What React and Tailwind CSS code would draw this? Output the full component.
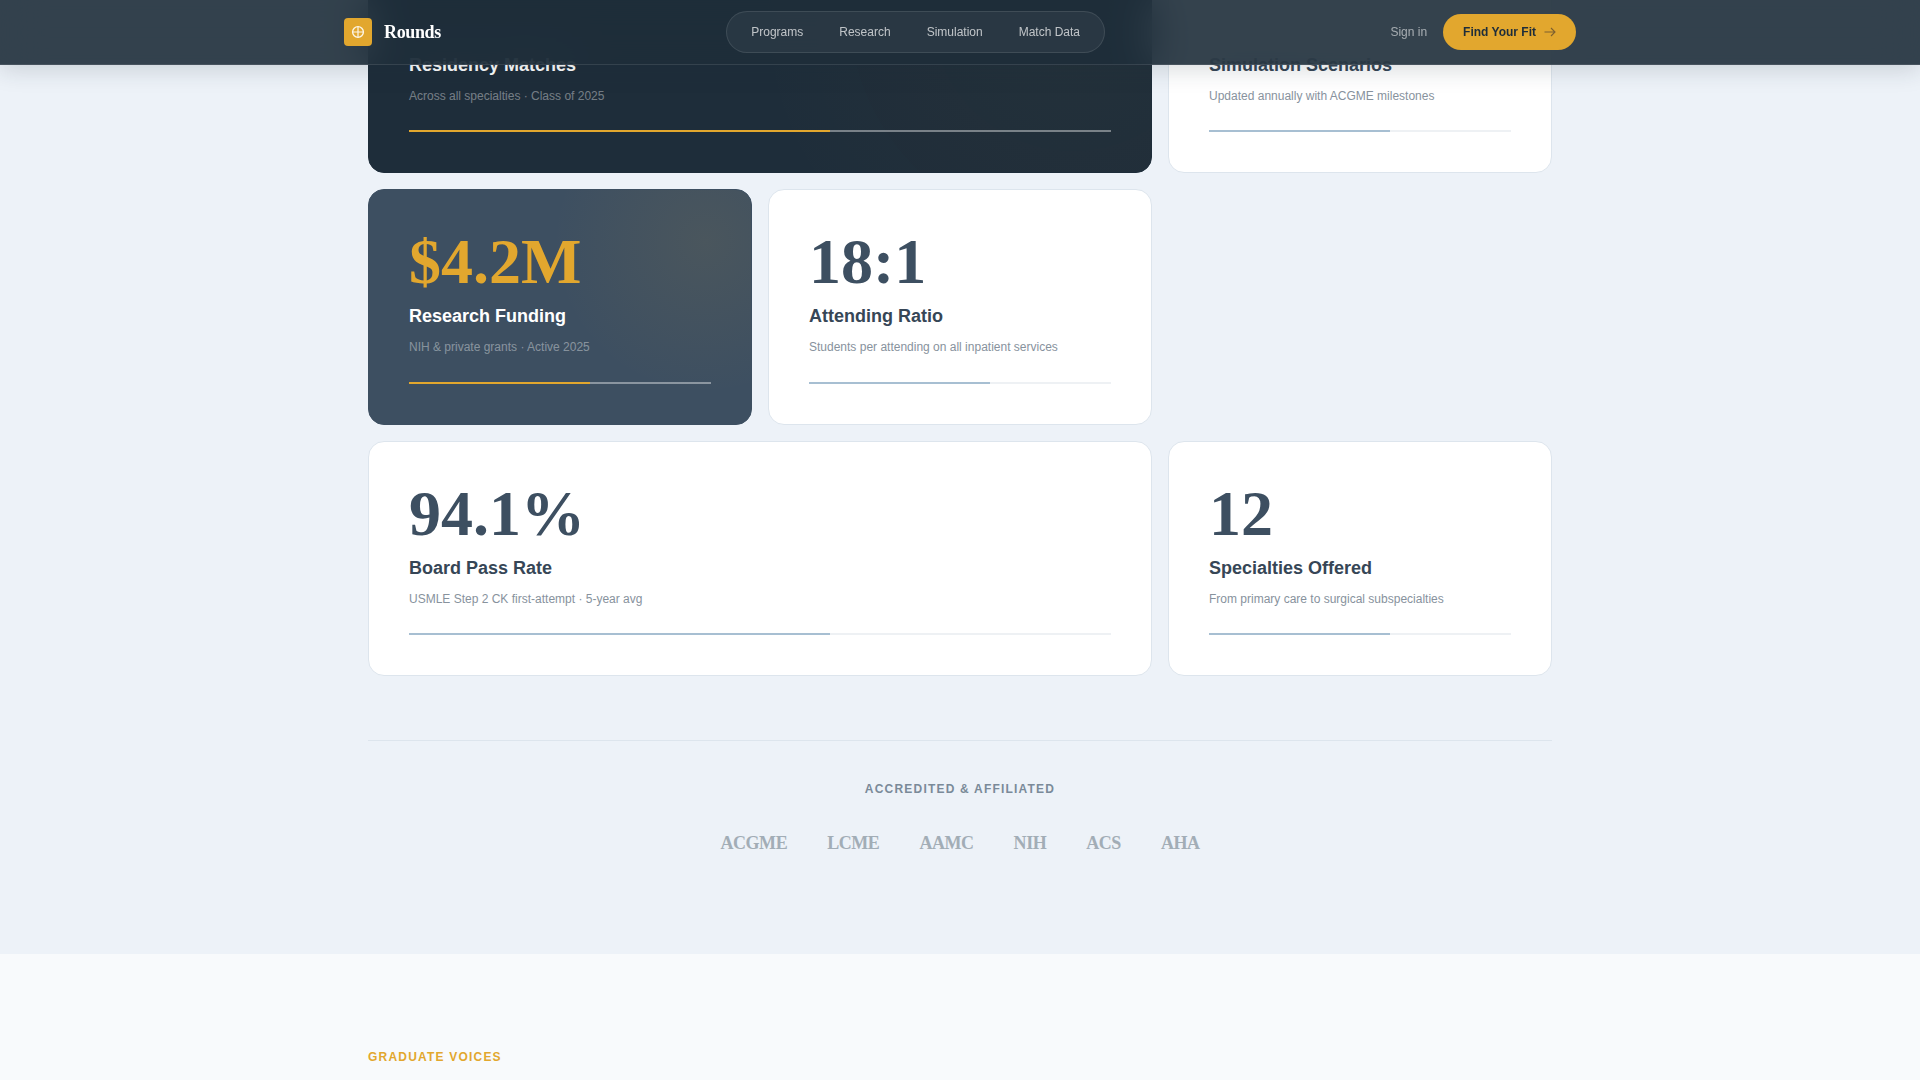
const navLinks = ["Programs", "Research", "Simulation", "Match Data"];
const logos = ["ACGME", "LCME", "AAMC", "NIH", "ACS", "AHA"];

const stats = [
  { title: "Residency Matches", sub: "Across all specialties · Class of 2025", tone: "navy", span: true },
  { title: "Simulation Scenarios", sub: "Updated annually with ACGME milestones", tone: "white" },
  { value: "$4.2M", title: "Research Funding", sub: "NIH & private grants · Active 2025", tone: "slate" },
  { value: "18:1", title: "Attending Ratio", sub: "Students per attending on all inpatient services", tone: "white", wrapAfter: true },
  { value: "94.1%", title: "Board Pass Rate", sub: "USMLE Step 2 CK first-attempt · 5-year avg", tone: "white", span: true },
  { value: "12", title: "Specialties Offered", sub: "From primary care to surgical subspecialties", tone: "white" },
];

const toneClasses = {
  navy: {
    card: "bg-[#1e2d3a] border-[#1e2d3a] bg-[radial-gradient(circle_at_90%_30%,rgba(226,167,46,0.03),transparent_45%)]",
    value: "text-[#e2a72e]",
    title: "text-white",
    sub: "text-white/40",
    track: "bg-white/40",
    fill: "bg-[#e2a72e]",
  },
  slate: {
    card: "bg-[#3d4f61] border-[#3d4f61] bg-[radial-gradient(circle_at_88%_22%,rgba(226,167,46,0.08),transparent_40%)]",
    value: "text-[#e2a72e]",
    title: "text-white",
    sub: "text-white/40",
    track: "bg-white/40",
    fill: "bg-[#e2a72e]",
  },
  white: {
    card: "bg-white border-[#dde5ed]",
    value: "text-[#3d4f61]",
    title: "text-[#364656]",
    sub: "text-[#87929d]",
    track: "bg-[#eef1f4]",
    fill: "bg-[#a7bfd2]",
  },
};

const StatCard = ({ stat }) => {
  const tone = toneClasses[stat.tone];
  return (
    <div className={`rounded-2xl border p-10 ${tone.card} ${stat.span ? "col-span-2" : ""}`}>
      {/* top row sits behind the nav, its figure never shows */}
      <div className={`h-16 font-['Liberation_Serif',serif] text-[64px] leading-none font-bold ${tone.value}`}>
        {stat.value}
      </div>
      <h3 className={`mt-[9px] text-lg leading-[27px] font-bold ${tone.title}`}>{stat.title}</h3>
      <p className={`mt-2 text-xs leading-[18px] ${tone.sub}`}>{stat.sub}</p>
      <div className={`mt-[25.6px] h-0.5 ${tone.track}`}>
        <div className={`h-full w-[60%] ${tone.fill}`}></div>
      </div>
    </div>
  );
};

export default function App() {
  return (
    <div className="relative h-screen overflow-hidden bg-[#edf2f8] font-['Liberation_Sans',Arial,sans-serif]">
      {/* nav floats over the scrolled page */}
      <nav className="absolute inset-x-0 top-0 z-10 border-b border-white/10 bg-[#1e2d3a]/[0.9] shadow-[0_4px_24px_rgba(30,45,58,0.18)] backdrop-blur-[20px]">
        <div className="mx-auto flex h-16 max-w-[1280px] items-center justify-between px-6">
          <div className="flex items-center gap-3">
            <div className="flex h-7 w-7 items-center justify-center rounded bg-[#e2a72e]">
              <svg width="14" height="14" viewBox="0 0 14 14" fill="none" stroke="#fdf6e6" strokeWidth="1.4">
                <circle cx="7" cy="7" r="5.4" />
                <path d="M7 1.6v10.8M1.6 7h10.8" strokeWidth="1.2" />
              </svg>
            </div>
            <span className="font-['Liberation_Serif',serif] text-lg font-bold tracking-[-0.02em] text-white">Rounds</span>
          </div>

          <div className="flex items-center rounded-full border border-white/10 bg-white/5 p-1.5">
            {navLinks.map((link) => (
              <a key={link} className="px-[18px] py-[5px] text-xs leading-[18px] text-white/70">
                {link}
              </a>
            ))}
          </div>

          <div className="flex items-center gap-4">
            <a className="text-xs text-white/55">Sign in</a>
            <button className="flex h-9 items-center gap-2 rounded-full bg-[#e2a72e] px-5 text-xs font-bold text-[#1e2d3a]">
              Find Your Fit
              <svg width="12" height="12" viewBox="0 0 12 12" fill="none" stroke="#7d6030" strokeWidth="1.1">
                <path d="M0.5 6h10.5M7 2l4 4-4 4" />
              </svg>
            </button>
          </div>
        </div>
      </nav>

      <section className="pb-[97.5px]">
        <div className="mx-auto -mt-[62.4px] max-w-[1280px] px-12">
          <div className="grid grid-cols-3 gap-4">
            {stats.map((stat) => (
              <div key={stat.title} className="contents">
                <StatCard stat={stat} />
                {stat.wrapAfter && <div></div>}
              </div>
            ))}
          </div>

          <div className="mt-16 border-t border-[#dde5ed] pt-10 text-center">
            <p className="text-xs leading-[16.5px] font-bold tracking-[0.1em] text-[#7a8a99] uppercase">
              Accredited &amp; Affiliated
            </p>
            <div className="mt-8 flex justify-center gap-10">
              {logos.map((logo) => (
                <span key={logo} className="font-['Liberation_Serif',serif] text-lg leading-[26.4px] font-bold tracking-[-0.025em] text-[#a2adb6]">
                  {logo}
                </span>
              ))}
            </div>
          </div>
        </div>
      </section>

      <section className="bg-[#f8fafc] pt-[95px] pb-24">
        <div className="mx-auto max-w-[1280px] px-12">
          <p className="text-xs leading-[16.5px] font-bold tracking-[0.1em] text-[#e2a72e] uppercase">Graduate Voices</p>
        </div>
      </section>
    </div>
  );
}
